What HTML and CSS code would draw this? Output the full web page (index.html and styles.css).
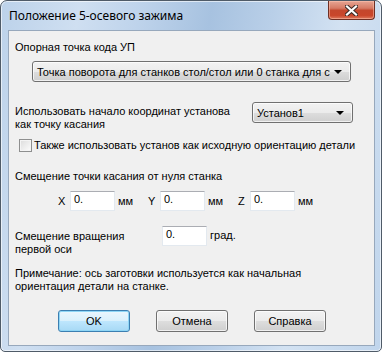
FILE: index.html
```html
<!DOCTYPE html>
<html>
<head>
<meta charset="UTF-8">
<title>Положение 5-осевого зажима</title>
<link rel="stylesheet" href="styles.css">
</head>
<body>
	<!-- Dialog window -->
	<div class="window">
		<div class="titlebar">
			<span class="title">Положение 5-осевого зажима</span>
			<div class="close-btn">
				<svg width="13" height="11" viewBox="0 0 13 11">
					<path d="M2 1.5 L11 9.5 M11 1.5 L2 9.5" stroke="#3b2a26" stroke-width="4.2" stroke-linecap="square"/>
					<path d="M2 1.5 L11 9.5 M11 1.5 L2 9.5" stroke="#ffffff" stroke-width="2.2" stroke-linecap="square"/>
				</svg>
			</div>
		</div>

		<div class="client">
			<div class="label first">Опорная точка кода УП</div>
			<div class="combo wide">
				<span class="combo-text">Точка поворота для станков стол/стол или 0 станка для стол/головка</span>
				<span class="arrow"></span>
			</div>

			<div class="row setup-row">
				<div class="label setup-label">Использовать начало координат установа<br>как точку касания</div>
				<div class="combo small">
					<span class="combo-text">Установ1</span>
					<span class="arrow"></span>
				</div>
			</div>

			<div class="check-row">
				<span class="checkbox"></span>
				<span>Также использовать установ как исходную ориентацию детали</span>
			</div>

			<div class="label offset-title">Смещение точки касания от нуля станка</div>
			<div class="xyz-row">
				<span class="axis">X</span><span class="field">0.</span><span class="unit">мм</span>
				<span class="axis">Y</span><span class="field">0.</span><span class="unit">мм</span>
				<span class="axis">Z</span><span class="field">0.</span><span class="unit">мм</span>
			</div>

			<div class="row rot-row">
				<div class="label rot-label">Смещение вращения<br>первой оси</div>
				<span class="field">0.</span><span class="rot-unit">град.</span>
			</div>

			<div class="label note">Примечание: ось заготовки используется как начальная<br>ориентация детали на станке.</div>

			<div class="buttons">
				<button class="btn default">OK</button>
				<button class="btn">Отмена</button>
				<button class="btn">Справка</button>
			</div>
		</div>
	</div>
</body>
</html>
```

FILE: styles.css
```css
body {
	margin: 0;
	background-color: #fff;
	font-family: "Liberation Sans", Arial, sans-serif;
	font-size: 11px;
	color: #000;
}

/* Window frame */
.window {
	width: 382px;
	height: 352px;
	box-sizing: border-box;
	border: 1px solid #4f5b68;
	border-radius: 7px 7px 5px 5px;
	padding: 0 6px 5px 7px;
	display: flex;
	flex-direction: column;
	background: linear-gradient(100deg, #bcd2ea 0%, #cfdff1 18%, #bed3eb 32%, #a7c2e0 48%, #b9cfe8 62%, #d3e2f2 78%, #c0d5ec 100%);
	box-shadow: inset 0 0 0 1px rgba(255, 255, 255, 0.6);
}

.titlebar {
	height: 29px;
	display: flex;
	justify-content: space-between;
	align-items: flex-start;
}

.title {
	font-family: "Noto Sans", "Open Sans", sans-serif;
	font-size: 12px;
	line-height: 16px;
	margin: 7px 0 0 1px;
	color: #000;
}

.close-btn {
	width: 45px;
	height: 18px;
	border: 1px solid #6e2f24;
	border-top: none;
	border-radius: 0 0 4px 4px;
	display: flex;
	justify-content: center;
	align-items: center;
	background: linear-gradient(#e7a594 0%, #d67a64 40%, #c4472d 52%, #c9462b 80%, #de7a5f 100%);
	box-shadow: inset 0 0 0 1px rgba(255, 200, 180, 0.5);
}

/* Client area */
.client {
	flex: 1;
	border: 1px solid #97a8bc;
	background-color: #f0f0f0;
	display: flex;
	flex-direction: column;
	align-items: flex-start;
}

.label {
	line-height: 13px;
	margin-left: 6px;
	white-space: nowrap;
}

.label.first {
	margin-top: 10px;
}

/* Combo boxes */
.combo {
	height: 19px;
	border: 1px solid #707070;
	border-radius: 3px;
	background: linear-gradient(#f2f2f2 0%, #ebebeb 50%, #dddddd 51%, #cfcfcf 100%);
	display: flex;
	align-items: center;
	overflow: hidden;
	box-shadow: inset 0 0 0 1px rgba(255, 255, 255, 0.7);
}

.combo.wide {
	width: 317px;
	margin: 7px 0 0 23px;
}

.combo.small {
	width: 99px;
}

.combo-text {
	flex: 1;
	padding-left: 4px;
	white-space: nowrap;
	overflow: hidden;
}

.arrow {
	width: 0;
	height: 0;
	border-left: 4px solid transparent;
	border-right: 4px solid transparent;
	border-top: 4px solid #000;
	margin: 1px 8px 0 4px;
}

.row {
	display: flex;
	align-items: flex-start;
}

.setup-row {
	margin-top: 20px;
}

.setup-label {
	width: 237px;
	margin-top: 3px;
}

/* Checkbox */
.check-row {
	display: flex;
	align-items: center;
	margin: 8px 0 0 10px;
	line-height: 13px;
	white-space: nowrap;
}

.checkbox {
	width: 11px;
	height: 11px;
	border: 1px solid #8e8f8f;
	background: linear-gradient(135deg, #dcdcdc, #fdfdfd);
	box-shadow: inset 0 0 0 1px #f4f4f4;
	margin-right: 2px;
}

.offset-title {
	margin-top: 18px;
}

/* Coordinate fields */
.xyz-row {
	display: flex;
	align-items: center;
	margin: 8px 0 0 49px;
}

.axis {
	width: 12px;
}

.field {
	width: 40px;
	height: 18px;
	line-height: 15px;
	padding-left: 3px;
	background-color: #fff;
	border: 1px solid #e3e9ef;
	border-top-color: #abadb3;
}

.unit {
	margin-left: 3px;
	width: 30px;
}

.xyz-row .unit:last-child {
	width: auto;
}

.rot-row {
	margin-top: 15px;
}

.rot-label {
	width: 147px;
	margin-top: 4px;
}

.rot-unit {
	margin: 3px 0 0 3px;
}

.note {
	margin-top: 11px;
}

/* Buttons */
.buttons {
	display: flex;
	gap: 26px;
	margin: 17px 0 0 49px;
}

.btn {
	width: 72px;
	height: 22px;
	border: 1px solid #707070;
	border-radius: 3px;
	background: linear-gradient(#f2f2f2 0%, #ebebeb 50%, #dddddd 51%, #cfcfcf 100%);
	box-shadow: inset 0 0 0 1px rgba(255, 255, 255, 0.7);
	font-family: "Liberation Sans", Arial, sans-serif;
	font-size: 11px;
	font-weight: normal;
	color: #000;
	padding: 0;
}

.btn.default {
	border-color: #3c7fb1;
	box-shadow: inset 0 0 0 1px #8fd6f6;
	background: linear-gradient(#eaf6fd 0%, #d9f0fc 50%, #bee6fd 51%, #a7d9f5 100%);
}
```
